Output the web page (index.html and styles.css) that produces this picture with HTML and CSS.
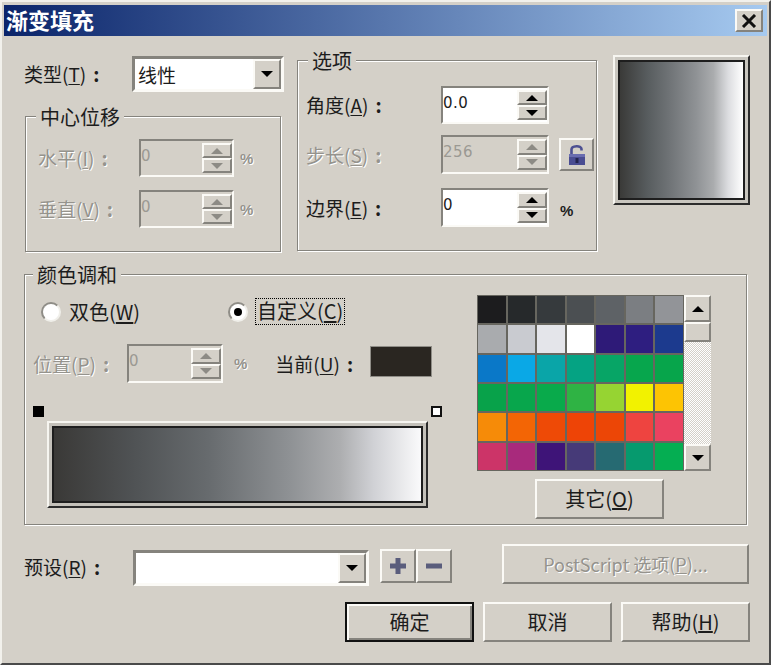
FILE: index.html
```html
<!DOCTYPE html>
<html lang="zh-CN">
<head>
<meta charset="utf-8">
<title>渐变填充</title>
<link rel="stylesheet" href="styles.css">
</head>
<body>
<div class="dialog">
  <header class="titlebar">
    <span class="title">渐变填充</span>
    <button class="raised close" aria-label="关闭">
      <svg width="16" height="14" viewBox="0 0 16 14"><path d="M2 1 L14 13 M14 1 L2 13" stroke="#111" stroke-width="3" fill="none"/></svg>
    </button>
  </header>

  <section class="top">
    <div class="left-col">
      <div class="type-row">
        <span class="label type-label">类型(<u>T</u>)<b class="colon">:</b></span>
        <div class="combo type-combo">
          <span class="combo-text">线性</span>
          <span class="raised combo-btn"><i class="tri down"></i></span>
        </div>
      </div>
      <div class="group center-group">
        <span class="group-title">中心位移</span>
        <div class="center-row">
          <span class="label off center-label">水平(<u>I</u>)<b class="colon">:</b></span>
          <div class="spin off center-spin"><span class="value">0</span><span class="spinner"><span class="raised"><i class="tri up"></i></span><span class="raised"><i class="tri down"></i></span></span></div>
          <span class="pct off">%</span>
        </div>
        <div class="center-row">
          <span class="label off center-label">垂直(<u>V</u>)<b class="colon">:</b></span>
          <div class="spin off center-spin"><span class="value">0</span><span class="spinner"><span class="raised"><i class="tri up"></i></span><span class="raised"><i class="tri down"></i></span></span></div>
          <span class="pct off">%</span>
        </div>
      </div>
    </div>

    <div class="group options-group">
      <span class="group-title">选项</span>
      <div class="opt-row">
        <span class="label opt-label">角度(<u>A</u>)<b class="colon">:</b></span>
        <div class="spin opt-spin"><span class="value">0.0</span><span class="spinner"><span class="raised"><i class="tri up"></i></span><span class="raised"><i class="tri down"></i></span></span></div>
      </div>
      <div class="opt-row opt-mid">
        <span class="label off opt-label">步长(<u>S</u>)<b class="colon">:</b></span>
        <div class="spin off opt-spin"><span class="value">256</span><span class="spinner"><span class="raised"><i class="tri up"></i></span><span class="raised"><i class="tri down"></i></span></span></div>
        <button class="raised lock" aria-label="锁定">
          <svg width="18" height="22" viewBox="0 0 18 22"><path d="M3.5 10 V5.500 C3.500 1.500 13.500 1 13.500 5 V6.500" fill="none" stroke="#4d5092" stroke-width="2.600"/><rect x="1" y="10" width="16" height="11" fill="#4a4d92"/><rect x="1" y="10" width="16" height="3" fill="#6a6db0"/><rect x="7.500" y="14" width="3" height="5" fill="#23244e"/></svg>
        </button>
      </div>
      <div class="opt-row opt-last">
        <span class="label opt-label">边界(<u>E</u>)<b class="colon">:</b></span>
        <div class="spin opt-spin"><span class="value">0</span><span class="spinner"><span class="raised"><i class="tri up"></i></span><span class="raised"><i class="tri down"></i></span></span></div>
        <span class="pct opt-pct">%</span>
      </div>
    </div>

    <div class="preview"><div class="preview-fill"></div></div>
  </section>

  <section class="group color-group">
    <span class="group-title">颜色调和</span>
    <div class="color-left">
      <div class="radio-row">
        <span class="radio-item radio-first"><i class="radio"></i><span class="label radio-label">双色(<u>W</u>)</span></span>
        <span class="radio-item"><i class="radio on"></i><span class="label radio-label focus">自定义(<u>C</u>)</span></span>
      </div>
      <div class="pos-row">
        <span class="label off pos-label">位置(<u>P</u>)<b class="colon">:</b></span>
        <div class="spin off pos-spin"><span class="value">0</span><span class="spinner"><span class="raised"><i class="tri up"></i></span><span class="raised"><i class="tri down"></i></span></span></div>
        <span class="pct off pos-pct">%</span>
        <span class="label cur-label">当前(<u>U</u>)<b class="colon">:</b></span>
        <span class="swatch"></span>
      </div>
      <div class="markers"><i class="marker dark"></i><i class="marker light"></i></div>
      <div class="bar"><div class="bar-fill"></div></div>
    </div>
    <div class="color-right">
      <div class="palette-wrap">
        <div class="palette">
          <i style="background:#1c1c1e"></i><i style="background:#26292b"></i><i style="background:#363a3d"></i><i style="background:#4b4f52"></i><i style="background:#5e6266"></i><i style="background:#7b7e82"></i><i style="background:#929498"></i>
          <i style="background:#a9abae"></i><i style="background:#c9cbd0"></i><i style="background:#e4e5ea"></i><i style="background:#ffffff"></i><i style="background:#2e1a78"></i><i style="background:#2e1e80"></i><i style="background:#1c3a8e"></i>
          <i style="background:#0a78c8"></i><i style="background:#0aa8e6"></i><i style="background:#0aa5a8"></i><i style="background:#05a383"></i><i style="background:#07a566"></i><i style="background:#07a64d"></i><i style="background:#07a54b"></i>
          <i style="background:#08a24a"></i><i style="background:#08a64c"></i><i style="background:#09aa4b"></i><i style="background:#2fb344"></i><i style="background:#96d432"></i><i style="background:#f2f200"></i><i style="background:#fdc403"></i>
          <i style="background:#f68b08"></i><i style="background:#f36505"></i><i style="background:#ee4a06"></i><i style="background:#ee4406"></i><i style="background:#ec4606"></i><i style="background:#ee4440"></i><i style="background:#ea4260"></i>
          <i style="background:#cc3468"></i><i style="background:#a82a7c"></i><i style="background:#3e1478"></i><i style="background:#463a78"></i><i style="background:#266a72"></i><i style="background:#069a6e"></i><i style="background:#05ae52"></i>
        </div>
        <div class="scroll">
          <span class="raised scroll-btn"><i class="tri up"></i></span>
          <span class="raised scroll-thumb"></span>
          <span class="scroll-track"></span>
          <span class="raised scroll-btn"><i class="tri down"></i></span>
        </div>
      </div>
      <button class="raised btn other">其它(<u>O</u>)</button>
    </div>
  </section>

  <section class="preset-row">
    <span class="label preset-label">预设(<u>R</u>)<b class="colon">:</b></span>
    <div class="combo preset-combo"><span class="combo-text"></span><span class="raised combo-btn"><i class="tri down"></i></span></div>
    <button class="raised tool tool-first" aria-label="添加">
      <svg width="18" height="18" viewBox="0 0 18 18"><path d="M6.500 1h5v5.500H17v5h-5.500V17h-5v-5.500H1v-5h5.500z" fill="#5a5d7c"/></svg>
    </button>
    <button class="raised tool" aria-label="删除">
      <svg width="18" height="18" viewBox="0 0 18 18"><rect x="1" y="6.500" width="16" height="5" fill="#5a5d7c"/></svg>
    </button>
    <button class="raised btn postscript">PostScript 选项(<u>P</u>)...</button>
  </section>

  <section class="action-row">
    <button class="raised btn default">确定</button>
    <button class="raised btn">取消</button>
    <button class="raised btn">帮助(<u>H</u>)</button>
  </section>
</div>
</body>
</html>
```
FILE: styles.css
```css
* { box-sizing: border-box; }
html, body { margin: 0; padding: 0; background: #d4d0c8; }
body { width: 771px; height: 665px; overflow: hidden; }
i { display: block; font-style: normal; }
button { padding: 0; margin: 0; font: inherit; color: inherit; }

.dialog {
  width: 771px; height: 665px;
  padding: 3px 2px 0 2px;
  background: #d4d0c8;
  border: 2px solid;
  border-color: #f2f1ec #4a4a4a #4a4a4a #f2f1ec;
  font-family: "Noto Sans CJK SC", "Liberation Sans", sans-serif;
  font-size: 19px;
  color: #1c1c1c;
}

.raised {
  display: flex; align-items: center; justify-content: center;
  background: #d4d0c8;
  border: 2px solid;
  border-color: #fbfaf6 #85837d #85837d #fbfaf6;
}

/* title */
.titlebar {
  height: 31px;
  display: flex; align-items: center; justify-content: space-between;
  padding: 0 4px 0 2px;
  background: linear-gradient(to right, #0a246a, #a6caf0);
}
.title { color: #fff; font-weight: 700; font-size: 22px; line-height: 28px; align-self: flex-start; }
.close { width: 28px; height: 23px; }

/* labels */
.label { white-space: nowrap; line-height: 26px; }
.label u { text-underline-offset: 2px; }
.colon { margin-left: 7px; font-weight: 700; }
.off { color: #95938d; text-shadow: 1px 1px 0 #fff; }
.pct { font: 700 15px "Liberation Sans", sans-serif; }

/* top section */
.top { display: flex; align-items: flex-start; margin-top: 19px; padding-left: 20px; height: 197px; }
.left-col { width: 273px; padding-top: 1px; }
.type-row { display: flex; align-items: center; height: 36px; }
.type-label { width: 108px; }

.combo {
  display: flex; align-items: stretch; justify-content: space-between;
  background: #fff;
  border: 3px solid;
  border-color: #85837d #fbfaf6 #fbfaf6 #85837d;
}
.combo-text { padding-left: 3px; line-height: 32px; }
.combo-btn { width: 28px; }
.type-combo { width: 152px; height: 36px; }

.tri { width: 0; height: 0; border-left: 6px solid transparent; border-right: 6px solid transparent; }
.tri.down { border-top: 6px solid #000; }
.tri.up { border-bottom: 6px solid #000; }
.off .tri.down { border-top-color: #8d8b85; }
.off .tri.up { border-bottom-color: #8d8b85; }

/* groups */
.group {
  position: relative;
  border: 1px solid #85837d;
  box-shadow: 1px 1px 0 #fff, inset 1px 1px 0 #fff;
}
.group-title {
  position: absolute; top: -13px; left: 10px;
  padding: 0 4px;
  background: #d4d0c8;
  font-size: 20px;
  line-height: 26px;
  white-space: nowrap;
}
.color-group .group-title { left: 8px; }

.center-group { width: 256px; height: 136px; margin: 24px 0 0 1px; padding: 22px 0 0 12px; }
.center-row { display: flex; align-items: center; height: 38px; margin-bottom: 13px; }
.center-label { width: 101px; }
.center-spin { width: 95px; height: 38px; margin-right: 6px; }

.spin {
  display: flex; justify-content: space-between;
  background: #fff;
  border: 2px solid;
  border-color: #85837d #fbfaf6 #fbfaf6 #85837d;
  text-shadow: none;
}
.spin.off { background: #d4d0c8; }
.value {
  padding: 5px 0 0 0;
  font: 15px/20px "DejaVu Sans", sans-serif;
  letter-spacing: 0.5px;
  color: #1c1c1c;
}
.spin.off .value { color: #9b9993; }
.spinner { width: 30px; display: flex; flex-direction: column; padding: 2px 0; }
.spinner .raised { flex: 1; }

.options-group { width: 300px; height: 191px; margin: 5px 0 0 0; padding: 25px 0 0 8px; }
.opt-row { display: flex; align-items: center; height: 38px; }
.opt-mid { margin-top: 11px; height: 39px; }
.opt-last { margin-top: 14px; height: 39px; }
.opt-label { width: 135px; }
.opt-spin { width: 108px; height: 100%; }
.lock { width: 35px; height: 33px; margin-left: 10px; }
.opt-pct { margin-left: 11px; margin-top: 6px; }

.preview {
  width: 137px; height: 150px;
  margin-left: 16px;
  padding: 3px;
  background: #c9c6bf;
  border: 2px solid;
  border-color: #f6f5f0 #2c2c2c #2c2c2c #f6f5f0;
}
.preview-fill {
  height: 100%;
  border: 2px solid #1e1e1e;
  background: linear-gradient(to right, #3a3a38 0%, #575c5e 22%, #6f7376 40%, #8f9295 62%, #aaacae 76%, #dcdde0 88%, #fff 100%);
}

/* colour blend */
.color-group { display: flex; width: 723px; height: 251px; margin: 22px 0 0 20px; padding-top: 20px; }
.color-left { width: 452px; padding-top: 3px; }
.radio-row { display: flex; align-items: center; height: 27px; padding-left: 16px; }
.radio-item { display: flex; align-items: center; }
.radio-first { width: 187px; }
.radio-first .label { margin-left: 8px; }
.radio-label { font-size: 20px; }
.radio {
  width: 20px; height: 20px; border-radius: 50%;
  background: #fff;
  border: 2px solid;
  border-color: #8f8d87 #f0efea #f0efea #8f8d87;
  display: flex; align-items: center; justify-content: center;
}
.radio.on::before { content: ""; width: 8px; height: 8px; border-radius: 50%; background: #000; }
.focus { margin-left: 7px; padding: 0 2px; height: 27px; outline: 1px dotted #000; outline-offset: -1px; }

.pos-row { display: flex; align-items: center; height: 39px; margin-top: 19px; padding-left: 8px; }
.pos-label { width: 94px; }
.pos-spin { width: 96px; height: 39px; }
.pos-pct { margin-left: 11px; }
.cur-label { margin-left: 28px; width: 95px; }
.swatch { width: 62px; height: 31px; align-self: flex-start; margin-top: 2px; background: #2a2621; border: 1px solid #8f8d87; }

.markers { display: flex; justify-content: space-between; width: 409px; margin: 23px 0 0 8px; }
.marker { width: 11px; height: 11px; }
.marker.dark { background: #000; }
.marker.light { background: #fff; border: 2px solid #111; }

.bar {
  width: 381px; height: 87px;
  margin: 4px 0 0 22px;
  padding: 3px;
  background: #c4c1ba;
  border: 2px solid;
  border-color: #f6f5f0 #2c2c2c #2c2c2c #f6f5f0;
}
.bar-fill {
  height: 100%;
  border: 2px solid #1e1e1e;
  background: linear-gradient(to right, #3a3937 0%, #505355 22%, #676b6e 42%, #8e9194 64%, #adaeb0 78%, #d0d1d5 87%, #fafafb 100%);
}

.palette-wrap { display: flex; width: 234px; height: 176px; }
.palette {
  width: 207px; height: 176px;
  display: grid;
  grid-template-columns: repeat(7, 1fr);
  grid-template-rows: repeat(6, 1fr);
  gap: 2px;
  padding: 1px;
  background: #67665f;
}
.scroll { width: 27px; display: flex; flex-direction: column; }
.scroll-btn { height: 27px; }
.scroll-thumb { height: 20px; }
.scroll-track {
  flex: 1;
  background: repeating-conic-gradient(#d4d0c8 0 25%, #fff 0 50%) 0 0 / 2px 2px;
}
.btn { width: 129px; height: 40px; line-height: 1; font-size: 20px; }
.other { margin: 8px 0 0 58px; }

/* bottom */
.preset-row { display: flex; align-items: flex-start; margin-top: 19px; padding-left: 20px; height: 40px; }
.preset-label { width: 109px; margin-top: 10px; }
.preset-combo { width: 236px; height: 36px; margin-top: 6px; }
.tool { width: 36px; height: 34px; margin-top: 5px; }
.tool-first { margin-left: 11px; }
.postscript {
  width: 247px; height: 40px; margin-left: 50px;
  font-size: 18px;
  color: #95938d; text-shadow: 1px 1px 0 #fff;
}

.action-row { display: flex; gap: 9px; margin-top: 18px; padding-left: 341px; }
.default {
  border: 2px solid #111;
  box-shadow: inset 2px 2px 0 #fbfaf6, inset -2px -2px 0 #85837d;
}
```
